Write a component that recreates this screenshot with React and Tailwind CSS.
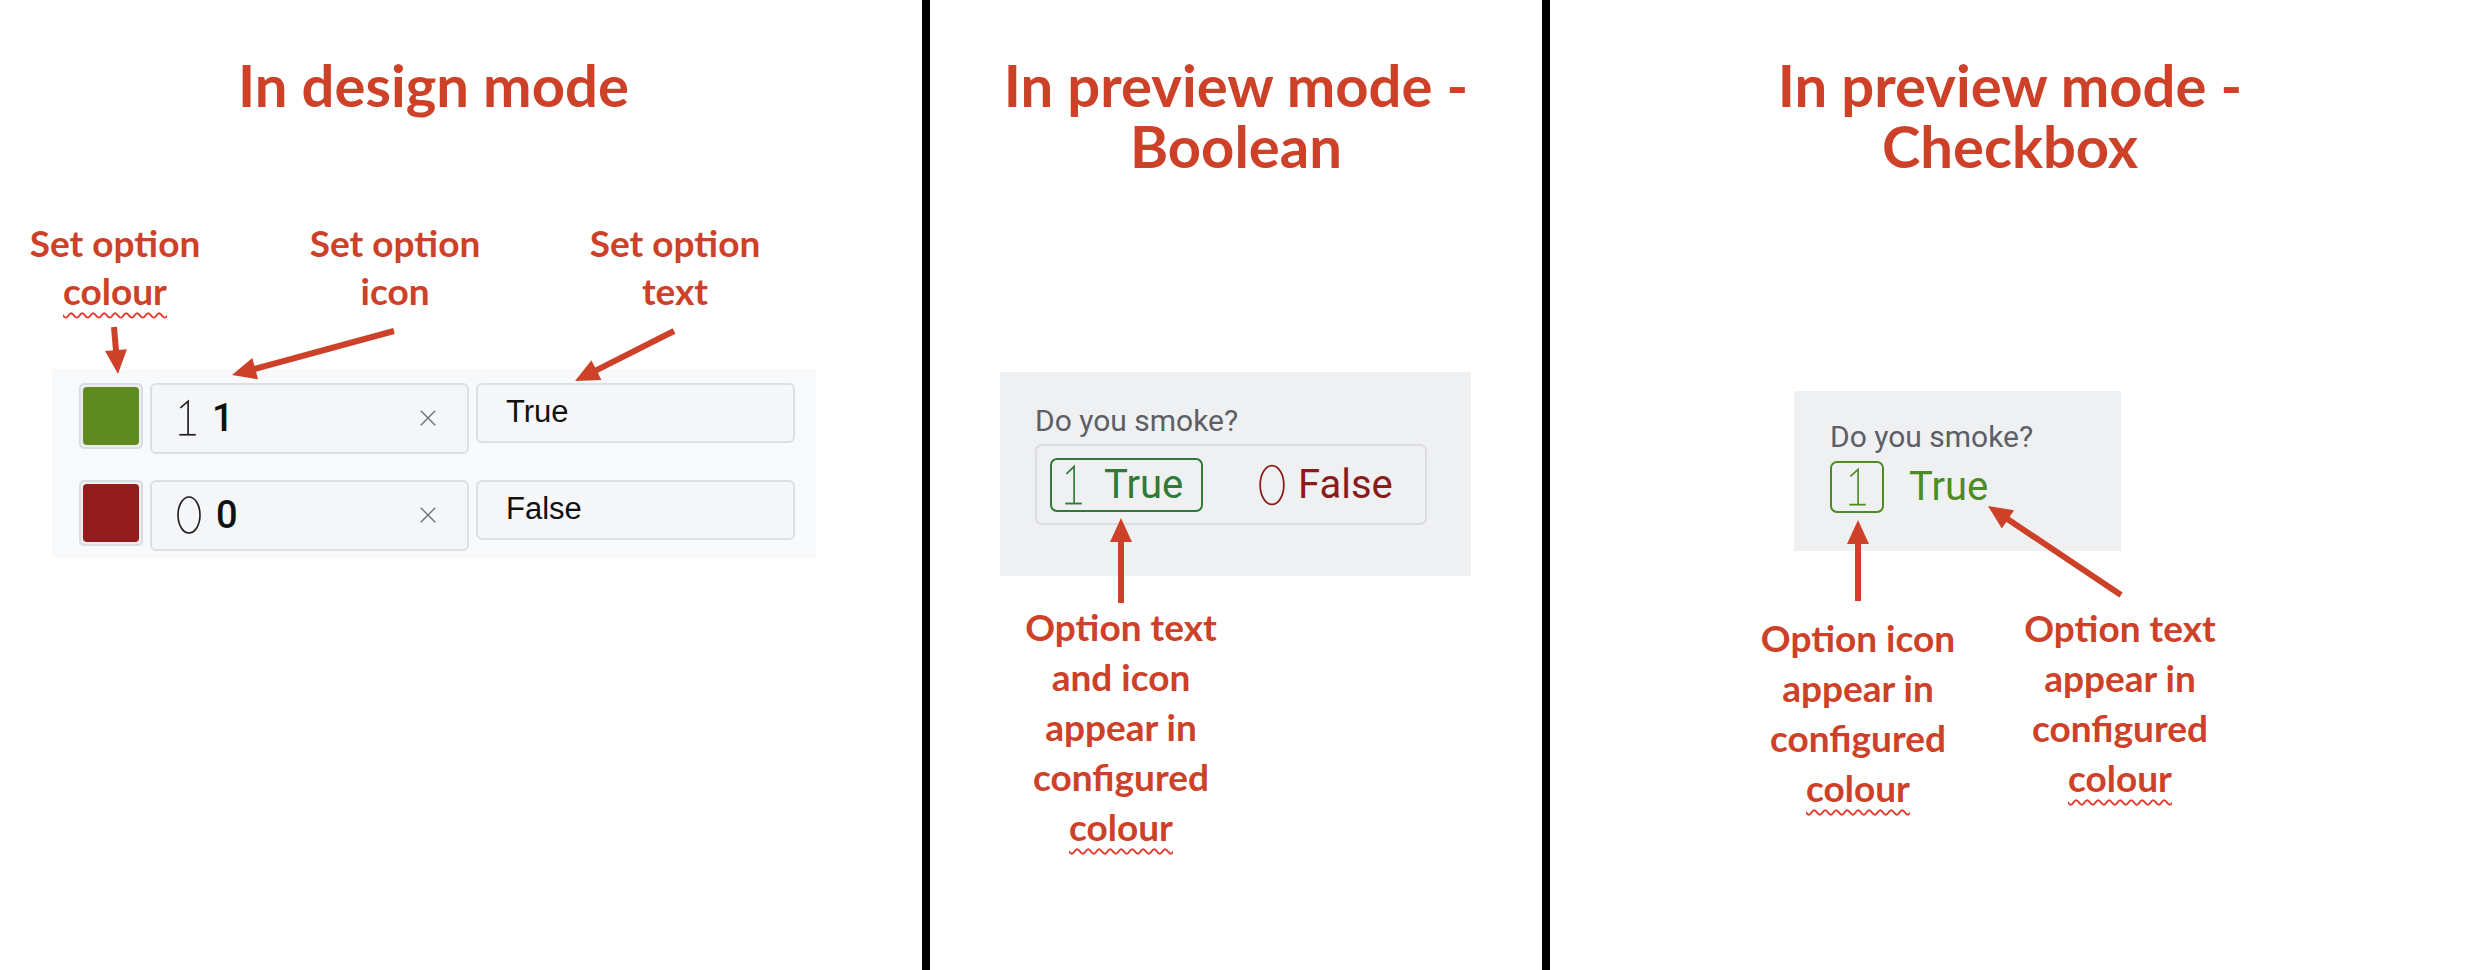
import React from 'react';

// ── Shared styles ──────────────────────────────────────────────────────────────

const RED = '#cd4129';

const ARROWS = [
  [114, 327, 118, 374],
  [394, 331, 232, 375],
  [674, 331, 575, 381],
  [1121, 603, 1121, 518],
  [1858, 601, 1858, 520],
  [2121, 595, 1988, 506],
];

function Arrow({ x1, y1, x2, y2 }) {
  const len = Math.hypot(x2 - x1, y2 - y1);
  const ux = (x2 - x1) / len;
  const uy = (y2 - y1) / len;
  const hl = 24;
  const hw = 11;
  const bx = x2 - ux * hl;
  const by = y2 - uy * hl;
  const pts = `${x2},${y2} ${bx - uy * hw},${by + ux * hw} ${bx + uy * hw},${by - ux * hw}`;
  return (
    <g>
      <line x1={x1} y1={y1} x2={bx + ux * 2} y2={by + uy * 2} stroke={RED} strokeWidth="6" />
      <polygon points={pts} fill={RED} />
    </g>
  );
}

// thin outlined digit icons (option icon glyphs)
function IconOne({ className }) {
  return (
    <svg viewBox="0 0 20 34" className={className} fill="none" stroke="currentColor" strokeWidth="1.5" preserveAspectRatio="none">
      <path d="M4 8 L11 2 L11 32" />
      <path d="M3 32 L18 32" />
    </svg>
  );
}

function IconZero({ className }) {
  return (
    <svg viewBox="0 0 26 40" className={className} fill="none" stroke="currentColor" strokeWidth="1.6">
      <ellipse cx="13" cy="20" rx="11" ry="18" />
    </svg>
  );
}

function Squiggle({ children }) {
  return (
    <span className="underline decoration-wavy decoration-[#e33b2e] decoration-[1.5px] underline-offset-[7px]">
      {children}
    </span>
  );
}

function Title({ lines }) {
  return (
    <h1 className="pt-[54px] text-center text-[58px] font-bold">
      {lines.map((l) => (
        <div key={l} className="leading-[61px] whitespace-nowrap">{l}</div>
      ))}
    </h1>
  );
}

// ── Panel 1: design mode ───────────────────────────────────────────────────────

function DesignRow({ color, Icon, iconSize, value, text }) {
  return (
    <div className="flex items-start gap-[7px]">
      <div className="w-[64px] h-[66px] rounded-[5px] border-2 border-[#d9dce0] p-[2px] bg-[#eceef0]">
        <div className="w-full h-full rounded-[4px]" style={{ background: color }} />
      </div>
      <div className="w-[319px] h-[71px] rounded-[6px] border-2 border-[#dcdfe3] bg-[#f5f6f8] flex items-center pl-[24px] pr-[30px]">
        <Icon className={`${iconSize} text-[#1d1d1f]`} />
        <span className="ml-[14px] text-[38px] font-medium text-[#111] font-['Roboto',sans-serif]">{value}</span>
        <span className="ml-auto">
          <svg viewBox="0 0 20 20" className="w-[18px] h-[20px]" stroke="#6b6e72" strokeWidth="1.5">
            <path d="M2 2 L18 18 M18 2 L2 18" />
          </svg>
        </span>
      </div>
      <div className="w-[319px] h-[60px] rounded-[6px] border-2 border-[#dcdfe3] bg-[#f6f7f9] flex items-center pl-[28px]">
        <span className="text-[31px] text-[#111] font-['Liberation_Sans',sans-serif]">{text}</span>
      </div>
    </div>
  );
}

function DesignPanel() {
  return (
    <div className="w-[922px] shrink-0">
      <h1 className="pt-[50px] pl-[238px] text-[58px] leading-[1.2] font-bold">In design mode</h1>
      <div className="flex gap-[80px] pl-[15px] mt-[99px] text-[37px] leading-[48px] font-bold text-center">
        <div className="w-[200px]">Set option<br /><Squiggle>colour</Squiggle></div>
        <div className="w-[200px]">Set option<br />icon</div>
        <div className="w-[200px]">Set option<br />text</div>
      </div>
      <div className="ml-[52px] mt-[54px] w-[764px] h-[189px] bg-[#f8f9fa] pl-[27px] pt-[14px] flex flex-col gap-[26px]">
        <DesignRow color="#5f8a1f" Icon={IconOne} iconSize="w-[22px] h-[38px]" value="1" text="True" />
        <DesignRow color="#941c1c" Icon={IconZero} iconSize="w-[26px] h-[40px]" value="0" text="False" />
      </div>
    </div>
  );
}

// ── Panel 2: preview boolean ──────────────────────────────────────────────────

function BooleanPanel() {
  return (
    <div className="w-[612px] shrink-0">
      <Title lines={['In preview mode -', 'Boolean']} />
      <div className="ml-[70px] mt-[196px] w-[471px] h-[204px] bg-[#eff0f2] pl-[35px] pt-[31px] font-['Roboto',sans-serif]">
        <div className="text-[30px] leading-[36px] text-[#5c6066]">Do you smoke?</div>
        <div className="mt-[5px] w-[392px] h-[81px] rounded-[7px] border-2 border-[#dcdde0] pl-[13px] pt-[12px] flex items-start">
          <div className="w-[153px] h-[54px] rounded-[7px] border-2 border-[#2f7a37] flex items-center pl-[10px] text-[#2f7a37]">
            <IconOne className="w-[22px] h-[42px]" />
            <span className="ml-[20px] text-[40px] leading-none">True</span>
          </div>
          <div className="ml-[55px] h-[54px] flex items-center text-[#8a1b1b]">
            <IconZero className="w-[28px] h-[44px]" />
            <span className="ml-[12px] text-[40px] leading-none">False</span>
          </div>
        </div>
      </div>
      <div className="ml-[21px] mt-[26px] w-[340px] text-center text-[37px] leading-[50px] font-bold">
        Option text<br />and icon<br />appear in<br />configured<br /><Squiggle>colour</Squiggle>
      </div>
    </div>
  );
}

// ── Panel 3: preview checkbox ─────────────────────────────────────────────────

function CheckboxPanel() {
  return (
    <div className="flex-1">
      <Title lines={['In preview mode -', 'Checkbox']} />
      <div className="ml-[244px] mt-[215px] w-[327px] h-[160px] bg-[#eff0f2] pl-[36px] pt-[28px] font-['Roboto',sans-serif]">
        <div className="text-[30px] leading-[36px] text-[#5c6066]">Do you smoke?</div>
        <div className="mt-[6px] flex items-center text-[#4b8c24]">
          <div className="w-[54px] h-[52px] rounded-[7px] border-2 border-[#4b8c24] flex items-center justify-center">
            <IconOne className="w-[22px] h-[40px]" />
          </div>
          <span className="ml-[25px] text-[40px] leading-none">True</span>
        </div>
      </div>
      <div className="flex items-start mt-[52px] text-[37px] leading-[50px] font-bold text-center">
        <div className="ml-[158px] w-[300px] pt-[10px]">
          Option icon<br />appear in<br />configured<br /><Squiggle>colour</Squiggle>
        </div>
        <div className="ml-[-38px] w-[300px]">
          Option text<br />appear in<br />configured<br /><Squiggle>colour</Squiggle>
        </div>
      </div>
    </div>
  );
}

export default function App() {
  return (
    <div className="relative w-[2470px] h-[970px] bg-white flex overflow-hidden font-['Lato',sans-serif]" style={{ color: RED }}>
      <DesignPanel />
      <div className="w-[8px] shrink-0 bg-black" />
      <BooleanPanel />
      <div className="w-[8px] shrink-0 bg-black" />
      <CheckboxPanel />
      <svg className="absolute inset-0 pointer-events-none" width="2470" height="970">
        {ARROWS.map(([x1, y1, x2, y2], i) => (
          <Arrow key={i} x1={x1} y1={y1} x2={x2} y2={y2} />
        ))}
      </svg>
    </div>
  );
}
